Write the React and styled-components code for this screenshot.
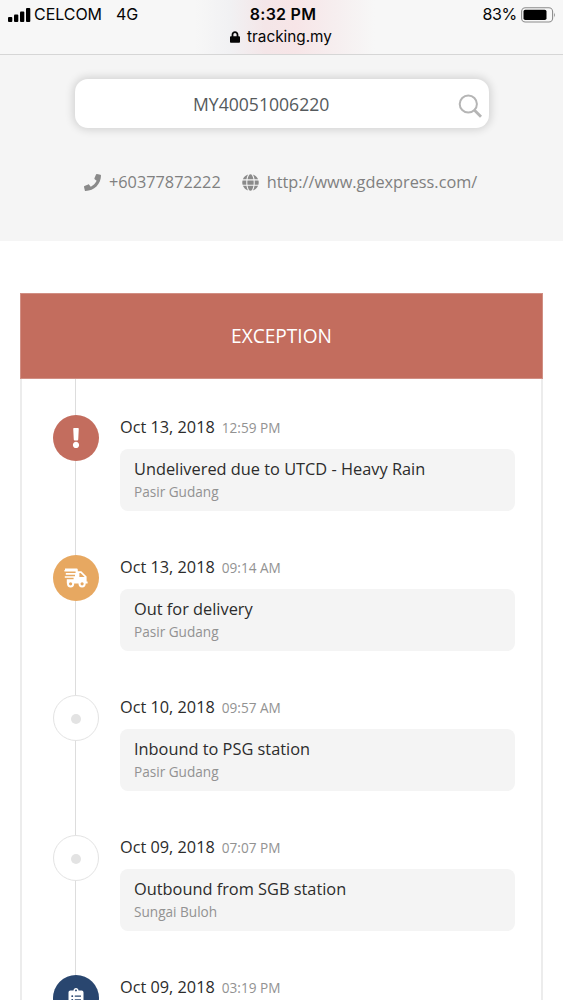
import React from "react";
import styled, { createGlobalStyle } from "styled-components";
import { FaPhone, FaGlobe, FaExclamation, FaClipboardList, FaLock } from "react-icons/fa";

const colors = {
    bar: "#f7f7f7",
    panel: "#f5f5f5",
    exception: "#c36d5e",
    delivery: "#e7a861",
    pickup: "#29466f",
    line: "#dddddd",
    text: "#2c2c2c",
    muted: "#929292",
};

const GlobalStyle = createGlobalStyle`
    * {
        box-sizing: border-box;
    }

    body {
        margin: 0;
        background: #fff;
        font-family: "Open Sans", "Noto Sans", sans-serif;
    }
`;

const Page = styled.div`
    width: 563px;
    height: 1000px;
    overflow: hidden;
    background: #fff;
`;

const BrowserBar = styled.header`
    height: 55px;
    padding: 4px 7px 0 8px;
    border-bottom: 1px solid #d6d6d6;
    background: linear-gradient(90deg, rgba(247, 247, 247, 0) 195px, #f1f1f3 230px, #f4e6e8 265px, #f7e5e7 295px, #f6eeef 335px, rgba(247, 247, 247, 0) 375px), ${colors.bar};
    font-family: Inter, "Liberation Sans", sans-serif;
    color: #050505;
`;

const StatusRow = styled.div`
    display: grid;
    grid-template-columns: 1fr auto 1fr;
    align-items: center;
    height: 21px;
    font-size: 16px;
    line-height: 21px;
`;

const Carrier = styled.div`
    display: flex;
    align-items: center;
    letter-spacing: -0.05px;
`;

const Signal = styled.svg`
    width: 23px;
    height: 14px;
    margin-right: 3px;
`;

const Network = styled.span`
    margin-left: 14px;
`;

const Clock = styled.div`
    padding-left: 2px;
    font-weight: 600;
    letter-spacing: 0.25px;
`;

const Battery = styled.div`
    display: flex;
    align-items: center;
    justify-content: flex-end;
    gap: 4px;
    letter-spacing: -0.3px;
`;

const Address = styled.div`
    display: flex;
    align-items: center;
    justify-content: center;
    gap: 7px;
    height: 23px;
    padding-right: 2px;
    font-size: 15.3px;

    svg {
        width: 10px;
        height: 12px;
    }
`;

const Hero = styled.section`
    height: 186px;
    padding-top: 24px;
    background: ${colors.panel};
`;

const SearchBox = styled.div`
    display: flex;
    align-items: center;
    width: 414px;
    height: 49px;
    margin-left: 75px;
    padding-right: 6px;
    border-radius: 13px;
    background: #fff;
    box-shadow: 0 0 8px 2px rgba(0, 0, 0, 0.14);

    svg {
        margin-top: 3px;
    }
`;

const TrackingNumber = styled.div`
    flex: 1;
    padding-left: 118px;
    font-size: 17.6px;
    color: #555a5d;
`;

const Contacts = styled.div`
    display: flex;
    align-items: center;
    height: 24px;
    margin-top: 42px;
    padding-left: 84px;
    font-size: 16.3px;
    color: #808080;
`;

const Contact = styled.div`
    display: flex;
    align-items: center;
    gap: 8px;
    margin-right: 21px;

    svg {
        color: #8a8a8a;
    }
`;

const Tracking = styled.section`
    width: 523px;
    margin: 52px 0 0 20px;
`;

const Status = styled.div`
    display: flex;
    align-items: center;
    justify-content: center;
    height: 86px;
    padding-bottom: 1px;
    border: 1px solid #d18f84;
    background: ${colors.exception};
    color: #fff;
    font-size: 19.1px;
`;

const Timeline = styled.div`
    padding: 36px 26px 0 31px;
    border: solid #ececec;
    border-width: 0 2px;
    background: linear-gradient(${colors.line}, ${colors.line}) 53px 0 / 1px 100% no-repeat;
`;

const Event = styled.div`
    display: flex;
    height: 140px;
`;

const Marker = styled.div`
    display: flex;
    flex: none;
    align-items: center;
    justify-content: center;
    width: 46px;
    height: 46px;
    margin-right: 21px;
    border: ${props => props.$color ? "none" : "1.5px solid #e3e3e3"};
    border-radius: 50%;
    background: ${props => props.$color || "#fff"};
    color: #fff;
`;

const Dot = styled.span`
    width: 10px;
    height: 10px;
    margin-top: 2px;
    border-radius: 50%;
    background: #e3e3e3;
`;

const Details = styled.div`
    flex: 1;
`;

const DateLine = styled.div`
    display: flex;
    align-items: baseline;
    gap: 7px;
    height: 34px;
    font-size: 16.3px;
    line-height: 25px;
    color: ${colors.text};
    white-space: nowrap;
`;

const Time = styled.span`
    font-size: 13.6px;
    color: ${colors.muted};
`;

const Card = styled.div`
    height: 62px;
    padding: 8px 14px 0;
    border-radius: 8px;
    background: #f4f4f4;
`;

const Message = styled.div`
    font-size: 16.35px;
    line-height: 24px;
    color: ${colors.text};
    white-space: nowrap;
`;

const Place = styled.div`
    font-size: 13.6px;
    line-height: 22px;
    color: ${colors.muted};
`;

const events = [
    {
        date: "Oct 13, 2018",
        time: "12:59 PM",
        message: "Undelivered due to UTCD - Heavy Rain",
        place: "Pasir Gudang",
        color: colors.exception,
        icon: <FaExclamation size={20} />,
    },
    {
        date: "Oct 13, 2018",
        time: "09:14 AM",
        message: "Out for delivery",
        place: "Pasir Gudang",
        color: colors.delivery,
        icon: <TruckIcon />,
    },
    { date: "Oct 10, 2018", time: "09:57 AM", message: "Inbound to PSG station", place: "Pasir Gudang" },
    { date: "Oct 09, 2018", time: "07:07 PM", message: "Outbound from SGB station", place: "Sungai Buloh" },
    {
        date: "Oct 09, 2018",
        time: "03:19 PM",
        color: colors.pickup,
        icon: <FaClipboardList size={20} />,
    },
];

function SignalBars() {
    return (
        <Signal viewBox="0 0 23 14">
            <rect x="0" y="9" width="4.3" height="5" rx="1" />
            <rect x="6" y="6.5" width="4.3" height="7.5" rx="1" />
            <rect x="12" y="3.5" width="4.3" height="10.5" rx="1" />
            <rect x="18" y="0" width="4.3" height="14" rx="1" />
        </Signal>
    );
}

function BatteryIcon() {
    return (
        <svg width="35" height="16" viewBox="0 0 35 16">
            <rect x="0.6" y="0.8" width="31" height="14.2" rx="3.8" fill="none" stroke="#8c8c8c" strokeWidth="1.1" />
            <rect x="2.5" y="2.7" width="23" height="10.3" rx="1.8" />
            <path d="M33 5.5q1.8 2.4 0 5z" fill="#8c8c8c" />
        </svg>
    );
}

function SearchIcon() {
    return (
        <svg width="25" height="25" viewBox="0 0 25 25" fill="none" stroke="#b5b5b5" strokeWidth="2">
            <circle cx="10.3" cy="11" r="8.6" />
            <path d="M16.5 17.2l6.5 6.5" strokeWidth="2.8" />
        </svg>
    );
}

function TruckIcon() {
    return (
        <svg width="24" height="20" viewBox="0 0 24 20" fill="currentColor">
            <path d="M1 0.5H12.6Q13.8 0.5 13.8 1.7V3.2H17.3L22.6 8.5V13.4H23.6V15.4H2.8V11.3H9.6V9.8H0.8V8.2H11V6.7H1.8V5.1H11.6V3.6H0.4V2H1z" />
            <path d="M15.4 5H16.6L20.6 9H15.4z" fill={colors.delivery} />
            <circle cx="6.6" cy="15.8" r="2.6" fill={colors.delivery} stroke="currentColor" strokeWidth="2" />
            <circle cx="18.1" cy="15.8" r="2.6" fill={colors.delivery} stroke="currentColor" strokeWidth="2" />
        </svg>
    );
}

function TrackingEvent({ date, time, message, place, color, icon }) {
    return (
        <Event>
            <Marker $color={color}>{icon || <Dot />}</Marker>
            <Details>
                <DateLine>
                    {date}
                    <Time>{time}</Time>
                </DateLine>
                <Card>
                    <Message>{message}</Message>
                    <Place>{place}</Place>
                </Card>
            </Details>
        </Event>
    );
}

export default function App() {
    return (
        <Page>
            <GlobalStyle />
            <BrowserBar>
                <StatusRow>
                    <Carrier>
                        <SignalBars />
                        CELCOM
                        <Network>4G</Network>
                    </Carrier>
                    <Clock>8:32 PM</Clock>
                    <Battery>
                        83%
                        <BatteryIcon />
                    </Battery>
                </StatusRow>
                <Address>
                    <FaLock />
                    tracking.my
                </Address>
            </BrowserBar>
            <Hero>
                <SearchBox>
                    <TrackingNumber>MY40051006220</TrackingNumber>
                    <SearchIcon />
                </SearchBox>
                <Contacts>
                    <Contact>
                        <FaPhone size={17} />
                        +60377872222
                    </Contact>
                    <Contact>
                        <FaGlobe size={17} />
                        http://www.gdexpress.com/
                    </Contact>
                </Contacts>
            </Hero>
            <Tracking>
                <Status>EXCEPTION</Status>
                <Timeline>
                    {events.map((event, i) => <TrackingEvent key={i} {...event} />)}
                </Timeline>
            </Tracking>
        </Page>
    );
}
